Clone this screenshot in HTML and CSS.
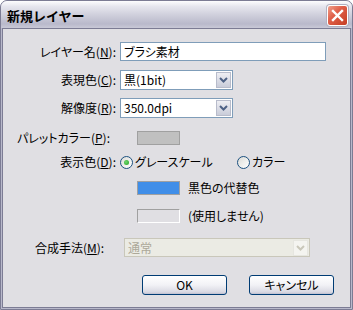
FILE: index.html
```html
<!DOCTYPE html>
<html lang="ja">
  <head>
    <meta charset="UTF-8" />
    <title>新規レイヤー</title>
    <link rel="stylesheet" href="styles.css">
  </head>
  <body>
    <div class="window">
      <div class="titlebar">
        <span class="title">新規レイヤー</span>
        <span class="close">
          <svg width="13" height="13" viewBox="0 0 13 13"><path d="M2 2 L11 11 M11 2 L2 11" stroke="#fff" stroke-width="2.4" stroke-linecap="square"/></svg>
        </span>
      </div>
      <div class="content">
        <div class="row row-name">
          <label class="label">レイヤー名(<u>N</u>):</label>
          <input class="textbox" type="text" value="ブラシ素材">
        </div>
        <div class="row row-combo">
          <label class="label">表現色(<u>C</u>):</label>
          <div class="combo">
            <span class="combo-text">黒(1bit)</span>
            <span class="combo-btn"><svg width="9" height="6" viewBox="0 0 9 6"><path d="M1 1 L4.5 4.5 L8 1" fill="none" stroke="#4d6185" stroke-width="2"/></svg></span>
          </div>
        </div>
        <div class="row row-combo2">
          <label class="label">解像度(<u>R</u>):</label>
          <div class="combo">
            <span class="combo-text">350.0dpi</span>
            <span class="combo-btn"><svg width="9" height="6" viewBox="0 0 9 6"><path d="M1 1 L4.5 4.5 L8 1" fill="none" stroke="#4d6185" stroke-width="2"/></svg></span>
          </div>
        </div>
        <div class="row row-palette">
          <label class="label label-palette">パレットカラー(<u>P</u>):</label>
          <span class="swatch swatch-gray"></span>
        </div>
        <div class="row row-radio">
          <label class="label">表示色(<u>D</u>):</label>
          <span class="radio-item first">
            <span class="radio checked"></span>グレースケール
          </span>
          <span class="radio-item">
            <span class="radio"></span>カラー
          </span>
        </div>
        <div class="row row-swatch">
          <span class="label"></span>
          <span class="swatch swatch-blue"></span>
          <span class="swatch-text">黒色の代替色</span>
        </div>
        <div class="row row-swatch2">
          <span class="label"></span>
          <span class="swatch swatch-empty"></span>
          <span class="swatch-text">(使用しません)</span>
        </div>
        <div class="row row-mode">
          <label class="label label-mode">合成手法(<u>M</u>):</label>
          <div class="combo combo-disabled">
            <span class="combo-text">通常</span>
            <span class="combo-btn"><svg width="9" height="6" viewBox="0 0 9 6"><path d="M1 1 L4.5 4.5 L8 1" fill="none" stroke="#c9c7ba" stroke-width="2"/></svg></span>
          </div>
        </div>
        <div class="row buttons">
          <button class="btn">OK</button>
          <button class="btn">キャンセル</button>
        </div>
      </div>
    </div>
  </body>
</html>
```

FILE: styles.css
```css
body {
  margin: 0;
  background-color: #ffffff;
  font-family: "Noto Sans CJK JP", "Noto Sans", sans-serif;
  font-size: 12px;
  line-height: 14px;
  font-feature-settings: "palt";
  color: #000;
}

.window {
  width: 353px;
  height: 310px;
  box-sizing: border-box;
  border: 1px solid #7c7c94;
  border-radius: 7px 7px 0 0;
  background-color: #b8b8ca;
  padding: 0 1px 1px;
  display: flex;
  flex-direction: column;
}

/* title bar */
.titlebar {
  height: 27px;
  box-sizing: border-box;
  margin: 0 -1px;
  padding: 2px 4px 0 6px;
  border-radius: 6px 6px 0 0;
  background: linear-gradient(#fdfdfe 0%, #e6e6ee 20%, #cdcdda 55%, #b9b9cb 85%, #c9c9d7 100%);
  display: flex;
  align-items: center;
  justify-content: space-between;
}

.title {
  font-weight: bold;
  font-size: 13px;
  font-feature-settings: normal;
}

.close {
  width: 21px;
  height: 21px;
  box-sizing: border-box;
  border: 1px solid #ffffff;
  border-radius: 3px;
  background: linear-gradient(135deg, #f0a08c 0%, #e0604a 40%, #c43c22 100%);
  box-shadow: 0 0 0 1px #b0b0c0;
  display: flex;
  align-items: center;
  justify-content: center;
}

.content {
  flex: 1;
  background-color: #e0dfe3;
  border: 1px solid #7c7c94;
  padding-top: 13px;
}

.row {
  display: flex;
  align-items: center;
}

.label {
  width: 113px;
  flex: none;
  padding-right: 4px;
  text-align: right;
  white-space: nowrap;
}

.row-name { height: 19px; }
.row-combo { height: 20px; margin-top: 9px; }
.row-combo2 { height: 20px; margin-top: 8px; }
.row-palette { height: 14px; margin-top: 13px; }
.row-radio { height: 14px; margin-top: 10px; }
.row-swatch { height: 14px; margin-top: 12px; }
.row-swatch2 { height: 14px; margin-top: 14px; }
.row-mode { height: 19px; margin-top: 15px; }

.textbox {
  width: 206px;
  height: 19px;
  box-sizing: border-box;
  border: 1px solid #7f9db9;
  padding: 0 3px;
  font: inherit;
  font-feature-settings: "palt";
  background-color: #fff;
  outline: none;
}

.combo {
  width: 113px;
  height: 20px;
  box-sizing: border-box;
  border: 1px solid #7f9db9;
  background-color: #fff;
  display: flex;
  align-items: center;
  padding: 1px;
}

.combo-text {
  flex: 1;
  padding-left: 2px;
}

.combo-btn {
  width: 15px;
  height: 16px;
  box-sizing: border-box;
  border: 1px solid #b8bccb;
  background: linear-gradient(#eeeef3, #c9ccd9);
  display: flex;
  align-items: center;
  justify-content: center;
}

.combo-disabled {
  width: 186px;
  height: 19px;
  border-color: #c9c7ba;
  background-color: #ebebe4;
  color: #aca899;
}

.combo-disabled .combo-btn {
  border-color: #e6e6e0;
  background: #f4f4f0;
}

.label-palette {
  width: 107px;
  padding-right: 10px;
}

.label-mode {
  width: 85px;
  padding-left: 32px;
  text-align: left;
}

.swatch {
  width: 43px;
  height: 14px;
  box-sizing: border-box;
  margin-left: 17px;
  border: 1px solid #a0a0a0;
}

.swatch-gray { background-color: #c0c0c0; }
.swatch-blue { background-color: #408ee8; }

.swatch-empty {
  background-color: #e0dfe3;
  border-color: #a0a0a0 #fff #fff #a0a0a0;
}

.swatch-text {
  margin-left: 8px;
}

/* radio buttons */
.radio-item {
  display: flex;
  align-items: center;
  gap: 2px;
}

.radio-item.first {
  width: 117px;
}

.radio {
  width: 13px;
  height: 13px;
  box-sizing: border-box;
  border: 1px solid #1c5180;
  border-radius: 50%;
  background: linear-gradient(135deg, #dcdcd7, #fff);
  display: flex;
  align-items: center;
  justify-content: center;
}

.radio.checked::after {
  content: "";
  width: 5px;
  height: 5px;
  border-radius: 50%;
  background: radial-gradient(circle at 40% 40%, #6fd86f, #21a121);
}

/* bottom buttons */
.buttons {
  margin-top: 18px;
  justify-content: flex-end;
  padding-right: 16px;
  gap: 22px;
}

.btn {
  width: 85px;
  height: 20px;
  box-sizing: border-box;
  border: 1px solid #003c74;
  border-radius: 3px;
  background: linear-gradient(#ffffff 0%, #f2f2f6 50%, #d8d8e2 90%, #bebece 100%);
  font: inherit;
  font-feature-settings: "palt";
  padding: 0;
  color: #000;
}
```
